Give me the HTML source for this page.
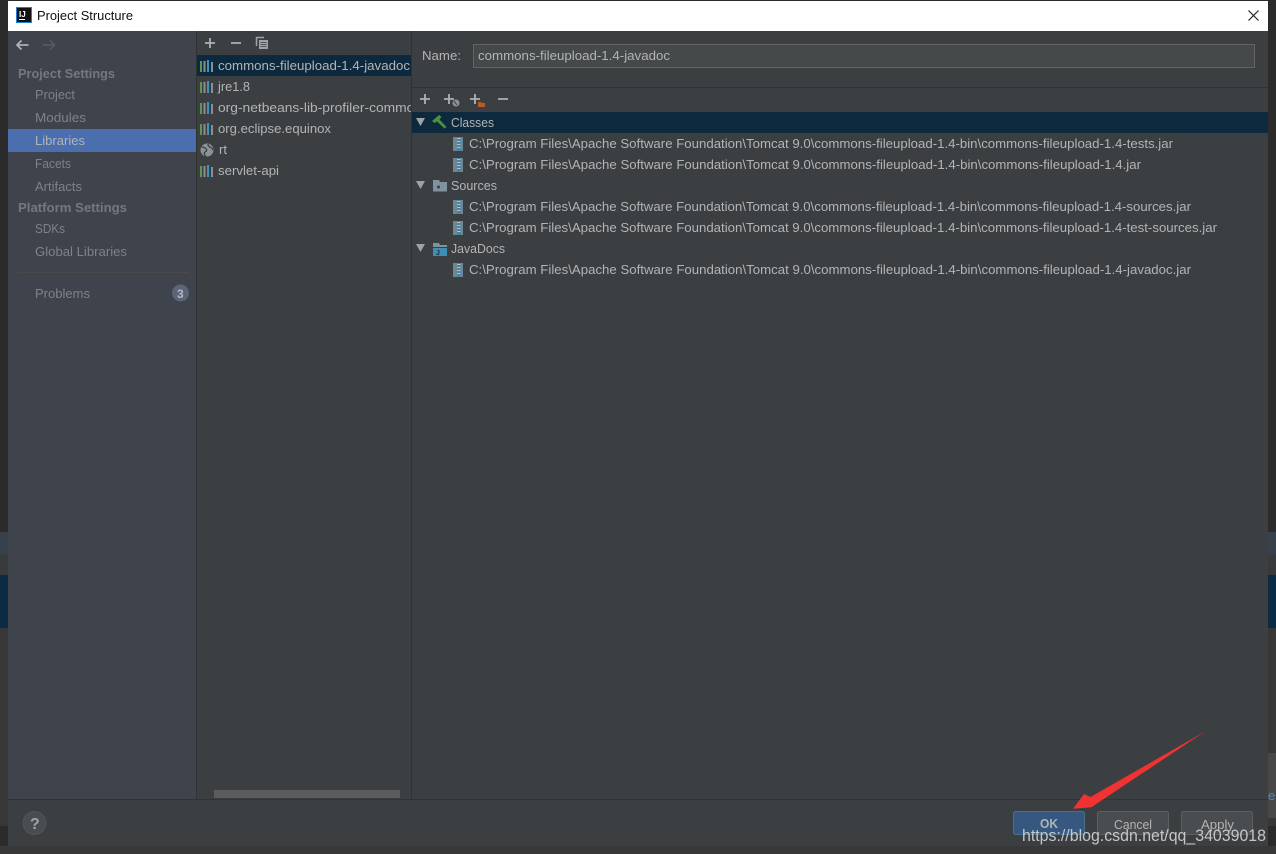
<!DOCTYPE html>
<html><head><meta charset="utf-8"><style>
html,body{margin:0;padding:0;background:#2b2b2b;width:1276px;height:854px;overflow:hidden}
svg{display:block}
text{font-family:"Liberation Sans",sans-serif;font-size:13px;fill:#b2b4b6;white-space:pre}
.s{fill:#7f8286}.h{fill:#75787d;font-weight:bold}
</style></head><body>
<svg width="1276" height="854" viewBox="0 0 1276 854" xmlns="http://www.w3.org/2000/svg">
<defs>
<g id="lib"><rect x="0" y="1" width="2" height="11" fill="#5b9a4c"/><rect x="3.500" y="1" width="2" height="11" fill="#8a8e91"/><rect x="7" y="0" width="2" height="12" fill="#3d93c0"/><rect x="11" y="2" width="2" height="10" fill="#8a8e91"/></g>
<g id="jar"><rect x="0" y="0" width="10" height="14" fill="#6f8592"/><rect x="4" y="0" width="3.500" height="14" fill="#3f86a8"/><path d="M4 1.500h3.500M4 4.500h3.500M4 7.500h3.500M4 10.500h3.500" stroke="#a9c2cf" stroke-width="1"/></g>
</defs>
<rect width="1276" height="854" fill="#2b2b2b"/>
<rect x="0" y="532" width="1276" height="23" fill="#37414b"/>
<rect x="0" y="555" width="1276" height="20" fill="#393a3b"/>
<rect x="0" y="575" width="1276" height="53" fill="#0c2a42"/>
<rect x="0" y="628" width="1276" height="198" fill="#373737"/>
<rect x="1268" y="753" width="8" height="65" fill="#484848"/>
<rect x="0" y="846" width="1276" height="8" fill="#383838"/>
<text x="1268" y="800" style="fill:#4a88d8">e.</text>

<rect x="8" y="1" width="1260" height="30" fill="#ffffff"/>
<rect x="8" y="31" width="1260" height="815" fill="#3c3f41"/>
<rect x="8" y="31" width="188" height="768" fill="#3e434c"/>
<rect x="196" y="31" width="1" height="768" fill="#323232"/>
<rect x="411" y="31" width="1" height="768" fill="#323232"/>
<rect x="8" y="799" width="1260" height="1" fill="#323232"/>
<rect x="412" y="87" width="856" height="1" fill="#323232"/>
<rect x="8" y="129" width="188" height="23" fill="#4b6eaf"/>
<rect x="197" y="55" width="214" height="21" fill="#0d293e"/>
<rect x="412" y="112" width="856" height="21" fill="#0d293e"/>

<!-- title -->
<rect x="16" y="7" width="16" height="16" fill="#1a7fe0"/><rect x="17" y="8" width="14" height="14" fill="#111"/>
<text x="19" y="17" style="font-size:8px;font-weight:bold;fill:#fff">IJ</text><rect x="19" y="19" width="6" height="1" fill="#fff"/>
<text x="37" y="20" textLength="96" lengthAdjust="spacingAndGlyphs" style="fill:#111">Project Structure</text>
<path d="M1248.500 10.500l10 10M1258.500 10.500l-10 10" stroke="#222" stroke-width="1.200" fill="none"/>

<!-- nav arrows -->
<path d="M28.500 45H17M21.500 40.500L17 45l4.500 4.500" stroke="#aeb1b3" stroke-width="1.800" fill="none"/>
<path d="M43 45h11M50 40.500l4.500 4.500-4.500 4.500" stroke="#565a60" stroke-width="1.800" fill="none"/>

<!-- sidebar -->
<text class="h" x="18" y="78" textLength="97" lengthAdjust="spacingAndGlyphs">Project Settings</text>
<text class="s" x="35" y="99" textLength="40" lengthAdjust="spacingAndGlyphs">Project</text>
<text class="s" x="35" y="122" textLength="51" lengthAdjust="spacingAndGlyphs">Modules</text>
<text x="35" y="145" textLength="50" lengthAdjust="spacingAndGlyphs">Libraries</text>
<text class="s" x="35" y="168" textLength="36" lengthAdjust="spacingAndGlyphs">Facets</text>
<text class="s" x="35" y="191" textLength="47" lengthAdjust="spacingAndGlyphs">Artifacts</text>
<text class="h" x="18" y="212" textLength="109" lengthAdjust="spacingAndGlyphs">Platform Settings</text>
<text class="s" x="35" y="233" textLength="30" lengthAdjust="spacingAndGlyphs">SDKs</text>
<text class="s" x="35" y="256" textLength="92" lengthAdjust="spacingAndGlyphs">Global Libraries</text>
<rect x="18" y="272" width="170" height="1" fill="#4a4a4a"/>
<text class="s" x="35" y="298" textLength="55" lengthAdjust="spacingAndGlyphs">Problems</text>
<circle cx="180.500" cy="293" r="8.500" fill="#5c6478"/>
<text x="177" y="298" style="font-size:12px;font-weight:bold;fill:#b5b8bd">3</text>

<!-- list toolbar -->
<path d="M205 43h10M210 38v10M231 43h10" stroke="#aeb1b3" stroke-width="1.800" fill="none"/>
<path d="M256.500 46V37.500H264" stroke="#a0a3a5" stroke-width="1.500" fill="none"/>
<rect x="259" y="40" width="9" height="9" fill="#a0a3a5"/><path d="M260.500 42.500h6M260.500 44.500h6M260.500 46.500h6" stroke="#3c3f41" stroke-width="0.800"/>

<!-- list -->
<use href="#lib" x="200" y="60"/>
<text x="218" y="70" textLength="192" lengthAdjust="spacingAndGlyphs">commons-fileupload-1.4-javadoc</text>
<use href="#lib" x="200" y="81"/>
<text x="218" y="91" textLength="32" lengthAdjust="spacingAndGlyphs">jre1.8</text>
<use href="#lib" x="200" y="102"/>
<svg x="197" y="97" width="214" height="21"><text x="21" y="15" textLength="204" lengthAdjust="spacingAndGlyphs">org-netbeans-lib-profiler-common</text></svg>
<use href="#lib" x="200" y="123"/>
<text x="218" y="133" textLength="113" lengthAdjust="spacingAndGlyphs">org.eclipse.equinox</text>
<circle cx="207" cy="150" r="6.500" fill="#8f9295"/><path d="M201.500 147c3 0 4 1 5 2.500s-1 2-2 3 1 3 1 4M208 144c0 2 1 3 3 3.500s1 2 2 2.500" stroke="#3c3f41" stroke-width="1.300" fill="none"/>
<text x="219" y="154" textLength="8" lengthAdjust="spacingAndGlyphs">rt</text>
<use href="#lib" x="200" y="165"/>
<text x="218" y="175" textLength="61" lengthAdjust="spacingAndGlyphs">servlet-api</text>
<rect x="214" y="790" width="186" height="8" fill="#5a5c5e"/>

<!-- name -->
<text x="422" y="60" textLength="39" lengthAdjust="spacingAndGlyphs">Name:</text>
<rect x="473.500" y="44.500" width="781" height="23" fill="#45494a" stroke="#646464"/>
<text x="478" y="60" textLength="192" lengthAdjust="spacingAndGlyphs">commons-fileupload-1.4-javadoc</text>

<!-- tree toolbar -->
<path d="M420 99h10M425 94v10M444 99h10M449 94v10M470 99h10M475 94v10M498 99h10" stroke="#aeb1b3" stroke-width="1.800" fill="none"/>
<circle cx="456" cy="103" r="3.500" fill="#8f9295"/><path d="M454 101l3 4" stroke="#3c3f41"/>
<path d="M478 102h3l1 1h3v4h-7z" fill="#b85a24"/>

<!-- tree -->
<path d="M416 118h9l-4.500 8z" fill="#a0a3a5"/>
<path d="M432 121l7-6 2.500 2-2 2.500 7 7.500-2 1.500-7.500-7-2.500 1.500z" fill="#4b8f3f"/>
<text x="451" y="127" textLength="43" lengthAdjust="spacingAndGlyphs">Classes</text>
<use href="#jar" x="453" y="137"/>
<text x="469" y="148" textLength="704" lengthAdjust="spacingAndGlyphs">C:\Program Files\Apache Software Foundation\Tomcat 9.0\commons-fileupload-1.4-bin\commons-fileupload-1.4-tests.jar</text>
<use href="#jar" x="453" y="158"/>
<text x="469" y="169" textLength="672" lengthAdjust="spacingAndGlyphs">C:\Program Files\Apache Software Foundation\Tomcat 9.0\commons-fileupload-1.4-bin\commons-fileupload-1.4.jar</text>
<path d="M416 181h9l-4.500 8z" fill="#a0a3a5"/>
<path d="M433 180h6l1 2h7v9.500h-14z" fill="#7f929e"/><circle cx="438.500" cy="187" r="1.500" fill="#3c3f41"/>
<text x="451" y="190" textLength="46" lengthAdjust="spacingAndGlyphs">Sources</text>
<use href="#jar" x="453" y="200"/>
<text x="469" y="211" textLength="722" lengthAdjust="spacingAndGlyphs">C:\Program Files\Apache Software Foundation\Tomcat 9.0\commons-fileupload-1.4-bin\commons-fileupload-1.4-sources.jar</text>
<use href="#jar" x="453" y="221"/>
<text x="469" y="232" textLength="748" lengthAdjust="spacingAndGlyphs">C:\Program Files\Apache Software Foundation\Tomcat 9.0\commons-fileupload-1.4-bin\commons-fileupload-1.4-test-sources.jar</text>
<path d="M416 244h9l-4.500 8z" fill="#a0a3a5"/>
<path d="M433 243h6l1 2h7v2h-14z" fill="#7f929e"/><rect x="433" y="248" width="14" height="8" fill="#3d8fb5"/>
<text x="436" y="255" style="font-size:7px;fill:#1c2a33;font-weight:bold">J</text>
<text x="451" y="253" textLength="54" lengthAdjust="spacingAndGlyphs">JavaDocs</text>
<use href="#jar" x="453" y="263"/>
<text x="469" y="274" textLength="722" lengthAdjust="spacingAndGlyphs">C:\Program Files\Apache Software Foundation\Tomcat 9.0\commons-fileupload-1.4-bin\commons-fileupload-1.4-javadoc.jar</text>

<!-- bottom -->
<circle cx="34.500" cy="823" r="11.500" fill="#4a4d4f" stroke="#525456"/>
<text x="30" y="829" style="font-size:16px;font-weight:bold;fill:#a0a3a5">?</text>
<rect x="1013.500" y="811.500" width="71" height="23" rx="2" fill="#365880" stroke="#4c708c"/>
<text x="1040" y="828" textLength="18" lengthAdjust="spacingAndGlyphs" style="font-weight:bold;fill:#b2b4b6">OK</text>
<rect x="1097.500" y="811.500" width="71" height="23" rx="2" fill="#4a4d4f" stroke="#5e6060"/>
<text x="1114" y="829" textLength="38" lengthAdjust="spacingAndGlyphs">Cancel</text>
<rect x="1181.500" y="811.500" width="71" height="23" rx="2" fill="#4a4d4f" stroke="#5e6060"/>
<text x="1201" y="829" textLength="33" lengthAdjust="spacingAndGlyphs">Apply</text>

<!-- arrow -->
<path d="M1073 808.700L1084 794L1090.500 797L1205 731.500L1097 803.500L1091.700 807.300Z" fill="#f03232"/>

<!-- watermark -->
<text x="1022" y="841" textLength="244" lengthAdjust="spacingAndGlyphs" style="font-size:16.500px;fill:#c4c7c8">https://blog.csdn.net/qq_34039018</text>
</svg>
</body></html>
